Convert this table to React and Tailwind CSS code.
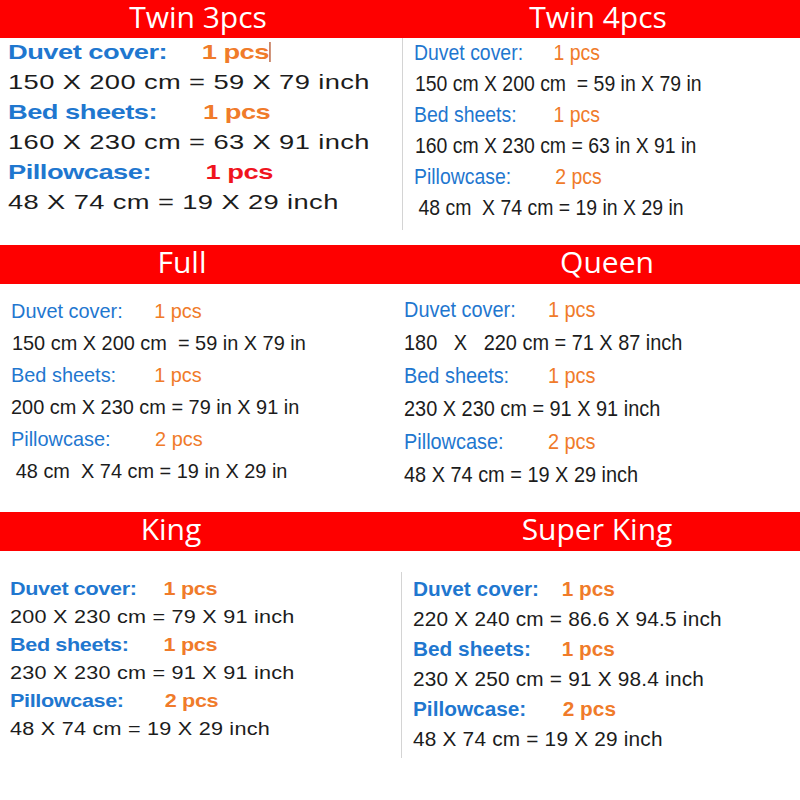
const BLUE = "text-[#1f77cf]"
const ORANGE = "text-[#f07b2a]"

function Header({ left, right, leftPad, rightPad, h }) {
  return (
    <div className={`grid grid-cols-2 bg-[#fe0000] text-white font-['Open_Sans',sans-serif] text-[30px] leading-none pb-[5px] ${h}`}>
      <div className={`flex items-center justify-center ${leftPad}`}>{left}</div>
      <div className={`flex items-center justify-center ${rightPad}`}>{right}</div>
    </div>
  )
}

function Item({ label, qty, w, labelCls = "", qtyCls = ORANGE, children }) {
  return (
    <div className="flex whitespace-pre">
      <span className={`shrink-0 ${w} ${BLUE} ${labelCls}`}>{label}</span>
      <span className={`${qtyCls} ${labelCls}`}>{qty}</span>
      {children}
    </div>
  )
}

function App() {
  return (
    <div className="w-[800px] h-[800px] bg-white overflow-hidden font-['Liberation_Sans',Arial,sans-serif] text-[#1c1c1c]">
      {/* row 1 */}
      <div className="h-[245px]">
        <Header left="Twin 3pcs" right="Twin 4pcs" leftPad="pr-[4px]" rightPad="pr-[4px]" h="h-[38px]" />
        <div className="grid grid-cols-2">
          <div className="pl-[8px]">
            <div className="origin-left scale-x-[1.3] text-[21px] leading-[30px] -mt-[1px]">
              <Item label="Duvet cover:" qty="1 pcs" w="w-[149px]" labelCls="font-bold tracking-[-0.4px]">
                <span className="inline-block w-[1px] h-[20px] mt-[5px] bg-[#b5542a]" />
              </Item>
              <div className="whitespace-pre tracking-[0.3px]">150 X 200 cm = 59 X 79 inch</div>
              <Item label="Bed sheets:" qty="1 pcs" w="w-[150px]" labelCls="font-bold tracking-[-0.4px]" />
              <div className="whitespace-pre tracking-[0.3px]">160 X 230 cm = 63 X 91 inch</div>
              <Item label="Pillowcase:" qty="1 pcs" w="w-[152px]" labelCls="font-bold tracking-[-0.4px]" qtyCls="text-[#f0141e]" />
              <div className="whitespace-pre tracking-[0.3px]">48 X 74 cm = 19 X 29 inch</div>
            </div>
          </div>
          <div className="ml-[2px] h-[192px] border-l border-[#d4d4d4] pl-[11px]">
            <div className="origin-left scale-x-[0.883] text-[22px] leading-[31px] -mt-[1px]">
              <Item label="Duvet cover:" qty="1 pcs" w="w-[158px]" />
              <div className="whitespace-pre ml-[1px]">150 cm X 200 cm  = 59 in X 79 in</div>
              <Item label="Bed sheets:" qty="1 pcs" w="w-[158px]" />
              <div className="whitespace-pre ml-[1px]">160 cm X 230 cm = 63 in X 91 in</div>
              <Item label="Pillowcase:" qty="2 pcs" w="w-[160px]" />
              <div className="whitespace-pre ml-[5px]">48 cm  X 74 cm = 19 in X 29 in</div>
            </div>
          </div>
        </div>
      </div>

      {/* row 2 */}
      <div className="h-[267px]">
        <Header left="Full" right="Queen" leftPad="pr-[36px]" rightPad="pl-[14px]" h="h-[39px]" />
        <div className="grid grid-cols-2">
          <div className="pl-[11px] pt-[11px]">
            <div className="origin-left scale-x-[0.948] text-[21px] leading-[32px]">
              <Item label="Duvet cover:" qty="1 pcs" w="w-[151px]" />
              <div className="whitespace-pre ml-[1px]">150 cm X 200 cm  = 59 in X 79 in</div>
              <Item label="Bed sheets:" qty="1 pcs" w="w-[151px]" />
              <div className="whitespace-pre">200 cm X 230 cm = 79 in X 91 in</div>
              <Item label="Pillowcase:" qty="2 pcs" w="w-[152px]" />
              <div className="whitespace-pre ml-[5px]">48 cm  X 74 cm = 19 in X 29 in</div>
            </div>
          </div>
          <div className="pl-[4px] pt-[9px]">
            <div className="origin-left scale-x-[0.905] text-[22px] leading-[33px]">
              <Item label="Duvet cover:" qty="1 pcs" w="w-[159px]" />
              <div className="whitespace-pre">180   X   220 cm = 71 X 87 inch</div>
              <Item label="Bed sheets:" qty="1 pcs" w="w-[159px]" />
              <div className="whitespace-pre">230 X 230 cm = 91 X 91 inch</div>
              <Item label="Pillowcase:" qty="2 pcs" w="w-[159px]" />
              <div className="whitespace-pre">48 X 74 cm = 19 X 29 inch</div>
            </div>
          </div>
        </div>
      </div>

      {/* row 3 */}
      <div>
        <Header left="King" right="Super King" leftPad="pr-[58px]" rightPad="pr-[6px]" h="h-[39px]" />
        <div className="grid grid-cols-2">
          <div className="pl-[10px] pt-[24px]">
            <div className="origin-left scale-x-[1.2] text-[18px] leading-[28px]">
              <Item label="Duvet cover:" qty="1 pcs" w="w-[128px]" labelCls="font-bold tracking-[-0.3px]" />
              <div className="whitespace-pre tracking-[0.2px]">200 X 230 cm = 79 X 91 inch</div>
              <Item label="Bed sheets:" qty="1 pcs" w="w-[128px]" labelCls="font-bold tracking-[-0.3px]" />
              <div className="whitespace-pre tracking-[0.2px]">230 X 230 cm = 91 X 91 inch</div>
              <Item label="Pillowcase:" qty="2 pcs" w="w-[129px]" labelCls="font-bold tracking-[-0.3px]" />
              <div className="whitespace-pre tracking-[0.2px]">48 X 74 cm = 19 X 29 inch</div>
            </div>
          </div>
          <div className="ml-[1px] mt-[21px] h-[186px] border-l border-[#d4d4d4] pl-[11px] pt-[2px]">
            <div className="origin-left scale-x-[1.04] text-[20px] leading-[30px]">
              <Item label="Duvet cover:" qty="1 pcs" w="w-[143px]" labelCls="font-bold" />
              <div className="whitespace-pre tracking-[0.2px]">220 X 240 cm = 86.6 X 94.5 inch</div>
              <Item label="Bed sheets:" qty="1 pcs" w="w-[143px]" labelCls="font-bold" />
              <div className="whitespace-pre tracking-[0.2px]">230 X 250 cm = 91 X 98.4 inch</div>
              <Item label="Pillowcase:" qty="2 pcs" w="w-[144px]" labelCls="font-bold" />
              <div className="whitespace-pre tracking-[0.2px]">48 X 74 cm = 19 X 29 inch</div>
            </div>
          </div>
        </div>
      </div>
    </div>
  )
}

export default App
